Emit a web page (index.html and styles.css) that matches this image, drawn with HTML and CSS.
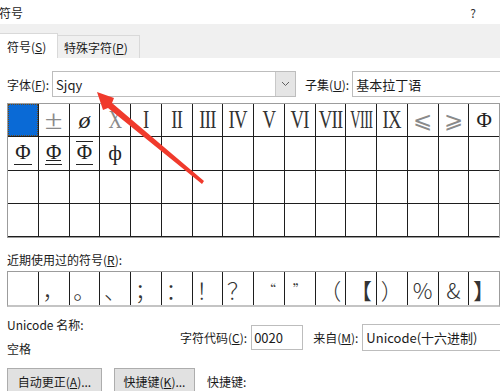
FILE: index.html
```html
<!DOCTYPE html>
<html lang="zh-CN">
<head>
    <meta charset="UTF-8">
    <meta name="viewport" content="width=device-width, initial-scale=1.0">
    <title>符号</title>
    <link rel="stylesheet" href="styles.css">
</head>
<body>
    <div class="dialog">
        <!-- 제목줄 -->
        <div class="titlebar">
            <span class="title">符号</span>
            <span class="help">?</span>
        </div>

        <!-- 탭 -->
        <div class="tabbar">
            <div class="tab active">符号(<u>S</u>)</div>
            <div class="tab">特殊字符(<u>P</u>)</div>
        </div>

        <div class="content">
            <div class="font_row">
                <span class="label">字体(<u>F</u>):</span>
                <div class="select font_select">
                    <span class="value">Sjqy</span>
                    <span class="drop">
                        <svg width="9" height="6" viewBox="0 0 9 6"><path d="M1 1 L4.5 4.5 L8 1" fill="none" stroke="#606060" stroke-width="1"/></svg>
                    </span>
                </div>
                <span class="label subset_label">子集(<u>U</u>):</span>
                <div class="select subset_select"><span class="value">基本拉丁语</span></div>
            </div>

            <!-- 문자표 -->
            <div class="grid">
                <div class="cell selected"></div>
                <div class="cell sym grey"><span class="pm">±</span></div>
                <div class="cell sym"><span class="phi">ø</span></div>
                <div class="cell sym grey"><span class="roman">X</span></div>
                <div class="cell sym"><span class="roman">I</span></div>
                <div class="cell sym"><span class="roman">II</span></div>
                <div class="cell sym"><span class="roman">III</span></div>
                <div class="cell sym"><span class="roman">IV</span></div>
                <div class="cell sym"><span class="roman">V</span></div>
                <div class="cell sym"><span class="roman">VI</span></div>
                <div class="cell sym"><span class="roman">VII</span></div>
                <div class="cell sym"><span class="roman tight">VIII</span></div>
                <div class="cell sym"><span class="roman">IX</span></div>
                <div class="cell sym grey">⩽</div>
                <div class="cell sym grey">⩾</div>
                <div class="cell sym small">Φ</div>

                <div class="cell sym small"><span class="bar bar_b">Φ</span></div>
                <div class="cell sym small"><span class="bar bar_b bar_m">Φ</span></div>
                <div class="cell sym small"><span class="bar bar_b bar_t">Φ</span></div>
                <div class="cell sym small">ф</div>
                <div class="cell"></div><div class="cell"></div><div class="cell"></div><div class="cell"></div>
                <div class="cell"></div><div class="cell"></div><div class="cell"></div><div class="cell"></div>
                <div class="cell"></div><div class="cell"></div><div class="cell"></div><div class="cell"></div>

                <div class="cell"></div><div class="cell"></div><div class="cell"></div><div class="cell"></div>
                <div class="cell"></div><div class="cell"></div><div class="cell"></div><div class="cell"></div>
                <div class="cell"></div><div class="cell"></div><div class="cell"></div><div class="cell"></div>
                <div class="cell"></div><div class="cell"></div><div class="cell"></div><div class="cell"></div>

                <div class="cell"></div><div class="cell"></div><div class="cell"></div><div class="cell"></div>
                <div class="cell"></div><div class="cell"></div><div class="cell"></div><div class="cell"></div>
                <div class="cell"></div><div class="cell"></div><div class="cell"></div><div class="cell"></div>
                <div class="cell"></div><div class="cell"></div><div class="cell"></div><div class="cell"></div>
            </div>

            <div class="recent_label">近期使用过的符号(<u>R</u>):</div>
            <div class="recent">
                <div class="rcell"></div>
                <div class="rcell">，</div>
                <div class="rcell">。</div>
                <div class="rcell">、</div>
                <div class="rcell">；</div>
                <div class="rcell">：</div>
                <div class="rcell">！</div>
                <div class="rcell">？</div>
                <div class="rcell quote">“</div>
                <div class="rcell quote">”</div>
                <div class="rcell">（</div>
                <div class="rcell">【</div>
                <div class="rcell">）</div>
                <div class="rcell">%</div>
                <div class="rcell">&amp;</div>
                <div class="rcell">】</div>
            </div>

            <div class="info_row">
                <div class="name_col">
                    <div>Unicode 名称:</div>
                    <div>空格</div>
                </div>
                <span class="label">字符代码(<u>C</u>):</span>
                <div class="input code_input">0020</div>
                <span class="label from_label">来自(<u>M</u>):</span>
                <div class="select from_select"><span class="value">Unicode(十六进制)</span></div>
            </div>

            <div class="button_row">
                <div class="btn autocorrect">自动更正(<u>A</u>)...</div>
                <div class="btn shortcut">快捷键(<u>K</u>)...</div>
                <span class="label">快捷键:</span>
            </div>
        </div>
    </div>

    <!-- 빨간 화살표 (주석) -->
    <svg class="arrow" width="500" height="391" viewBox="0 0 500 391">
        <polygon points="97,92 114,98 112,103 204,181 202,184 108,108 103,110" fill="#f03a2c"/>
    </svg>
</body>
</html>
```

FILE: styles.css
```css
body{margin:0; width:500px; height:391px; overflow:hidden; position:relative;
    font-family:"Noto Sans CJK SC", "Noto Sans", sans-serif; font-size:12px; color:#1a1a1a; background:#fff;}
u{text-decoration:underline; text-underline-offset:1px;}

.titlebar{height:24px; display:flex; align-items:center; justify-content:space-between; padding:0 24px 0 0; background:#fff;}
.title{font-size:12px; margin-left:-1px;}
.help{font-size:12px; color:#333;}

.tabbar{height:34px; background:#f0f0f0; display:flex; align-items:flex-end;}
.tab{height:23px; padding:0 6px; display:flex; align-items:center; border:1px solid #d9d9d9; border-bottom:none; box-sizing:border-box; background:#f0f0f0;}
.tab.active{height:25px; width:58px; background:#fff; border-left:none; padding-left:7px;}
.tab:not(.active){width:82px; border-left:none;}

.content{padding:0 0 0 7px;}

.font_row{display:flex; align-items:center; height:26px; margin-top:13px;}
.label{white-space:nowrap;}
.select{height:26px; box-sizing:border-box; border:1px solid #bdbdbd; display:flex; align-items:center; background:#fff;}
.select .value{padding-left:3px; font-size:13px; white-space:nowrap;}
.font_select{width:244px; margin-left:3px; justify-content:space-between;}
.drop{width:19px; height:24px; background:#e5e5e5; border-left:1px solid #c8c8c8; display:flex; align-items:center; justify-content:center;}
.subset_label{margin-left:9px;}
.subset_select{flex:1; margin-left:3px; border-right:none;}

.grid{margin-top:6px; width:493px; display:grid; grid-template-columns:repeat(16, 1fr); grid-auto-rows:32.3px;
    gap:1px; background:#1e1e1e; border:1px solid #9c9c9c; box-sizing:border-box; height:135px;}
.cell{background:#fff; display:flex; align-items:center; justify-content:center; overflow:hidden;}
.cell.selected{background:#0a6ad6; outline:1px dotted #6b4a1a; outline-offset:-1px;}
.sym{font-family:"Liberation Serif", "DejaVu Serif", serif; font-size:23px; color:#222; line-height:1;}
.sym.grey{color:#8a8a8a;}
.pm{font-size:28px; font-weight:300; transform:scaleX(1.15);}
.phi{font-style:italic; font-size:24px; color:#222;}
.roman{display:inline-block; transform:scaleX(0.72); letter-spacing:-1px; font-size:26px; color:#333; white-space:nowrap;}
.grey .roman{color:#8a8a8a;}
.roman.tight{transform:scaleX(0.55);}
.sym.small{font-size:21px; font-family:"Liberation Serif", serif; color:#222;}
.bar{display:inline-block; line-height:1; position:relative; padding:0 1px;}
.bar_b{border-bottom:1.5px solid #222; padding-bottom:1px;}
.bar_t{border-top:1.5px solid #222;}
.bar_m::after{content:''; position:absolute; left:1px; right:1px; bottom:3px; border-top:1px solid #222;}

.recent_label{margin-top:14px; height:16px; line-height:16px;}
.recent{margin-top:3px; width:493px; height:36px; display:grid; grid-template-columns:repeat(16, 1fr);
    gap:1px; background:#1e1e1e; border:1px solid #9c9c9c; border-bottom:2px solid #c4c4c4; box-sizing:border-box;}
.rcell{background:#fff; display:flex; align-items:center; justify-content:center; font-size:22px; font-weight:300; color:#333; line-height:1;}
.rcell.quote{font-size:14px;}

.info_row{display:flex; align-items:center; margin-top:10px; height:40px;}
.name_col{width:173px; display:flex; flex-direction:column; gap:8px; line-height:16px; font-size:12px;}
.input{height:25px; box-sizing:border-box; border:1px solid #bdbdbd; display:flex; align-items:center; padding-left:2px; font-size:13px;}
.code_input{width:52px; margin-left:4px;}
.from_label{margin-left:10px;}
.from_select{flex:1; height:27px; margin-left:4px; border-right:none;}

.button_row{display:flex; align-items:center; margin-top:11px;}
.btn{height:27px; box-sizing:border-box; background:#e1e1e1; border:1px solid #adadad; display:flex; align-items:center; justify-content:center;}
.autocorrect{width:95px;}
.shortcut{width:81px; margin-left:12px;}
.button_row .label{margin-left:12px;}

.arrow{position:absolute; left:0; top:0; pointer-events:none;}
```
